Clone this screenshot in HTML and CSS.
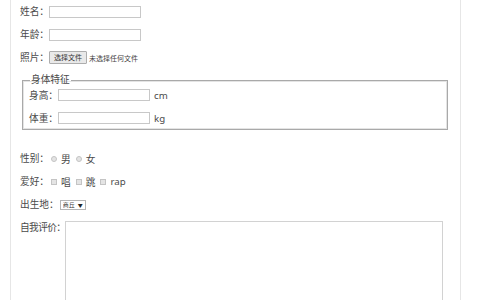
FILE: index.html
```html
<!DOCTYPE html>
<html lang="zh-CN">
<head>
<meta charset="UTF-8">
<meta name="viewport" content="width=device-width, initial-scale=1.0">
<title>个人信息</title>
<link rel="stylesheet" href="styles.css">
</head>
<body>
<div class="page">
  <form class="form">
    <div class="row">
      <label class="lbl">姓名：</label>
      <input type="text" class="text">
    </div>
    <div class="row">
      <label class="lbl">年龄：</label>
      <input type="text" class="text">
    </div>
    <div class="row">
      <label class="lbl">照片：</label>
      <button type="button" class="file-btn">选择文件</button>
      <span class="file-none">未选择任何文件</span>
    </div>

    <fieldset class="body-info">
      <legend>身体特征</legend>
      <div class="row small">
        <label class="lbl">身高：</label>
        <input type="text" class="text">
        <span class="unit">cm</span>
      </div>
      <div class="row small next">
        <label class="lbl">体重：</label>
        <input type="text" class="text">
        <span class="unit">kg</span>
      </div>
    </fieldset>

    <div class="row after-set">
      <label class="lbl">性别：</label>
      <input type="radio" name="sex" class="radio"><span class="opt">男</span>
      <input type="radio" name="sex" class="radio"><span class="opt">女</span>
    </div>
    <div class="row">
      <label class="lbl">爱好：</label>
      <input type="checkbox" class="check"><span class="opt">唱</span>
      <input type="checkbox" class="check"><span class="opt">跳</span>
      <input type="checkbox" class="check"><span class="opt">rap</span>
    </div>
    <div class="row">
      <label class="lbl">出生地：</label>
      <span class="city">
        <select class="city-select">
          <option>商丘</option>
          <option>郑州</option>
          <option>洛阳</option>
        </select>
        <span class="city-arrow">▼</span>
      </span>
    </div>
    <div class="row top">
      <label class="lbl tight">自我评价：</label>
      <textarea class="intro"></textarea>
    </div>
  </form>
</div>
</body>
</html>
```

FILE: styles.css
```css
body {
  margin: 0;
  background-color: #fff;
  font-family: "Noto Sans", "Noto Sans CJK SC", sans-serif;
  font-size: 9.7px;
  color: #4a4a4a;
}

.page {
  margin-left: 10px;
  width: 449px;
  border-left: 1px solid #e6e6e6;
  border-right: 1px solid #e6e6e6;
  height: 300px;
  overflow: hidden;
}

.form {
  padding: 0 12px 0 9px;
}

.row {
  display: flex;
  align-items: center;
  height: 23px;
}

.row.top {
  align-items: flex-start;
  height: auto;
}

.row.small {
  height: 16px;
}

.row.next {
  margin-top: 7px;
}

.lbl {
  line-height: 23px;
  white-space: nowrap;
}

.lbl.tight {
  letter-spacing: -0.6px;
}

.text {
  box-sizing: border-box;
  width: 92px;
  height: 12px;
  border: 1px solid #c8c8c8;
  padding: 0;
  margin: 0;
  background: #fff;
}

.file-btn {
  box-sizing: border-box;
  height: 13px;
  padding: 0 4px;
  margin: 0;
  font-family: inherit;
  font-size: 7px;
  color: #333;
  background-color: #e9e9e9;
  border: 1px solid #adadad;
  border-radius: 1px;
  line-height: 11px;
}

.file-none {
  font-size: 7px;
  color: #444;
  margin-left: 2px;
}

.body-info {
  margin: 4px 0 0 2px;
  padding: 0 6px 3px 6px;
  border: 1px solid #a9a9a9;
  box-shadow: inset 0 0 0 1px #e4e4e4;
}

.body-info legend {
  padding: 0 1px;
  margin-left: 1px;
  line-height: 14px;
}

.unit {
  margin-left: 4px;
}

.row.after-set {
  margin-top: 17px;
}

.radio,
.check {
  appearance: none;
  -webkit-appearance: none;
  box-sizing: border-box;
  width: 6px;
  height: 6px;
  margin: 0 4px 0 2px;
  border: 1px solid #c4c4c4;
  background-color: #e4e4e4;
}

.radio {
  border-radius: 50%;
}

.opt {
  margin-right: 3px;
}

.city {
  display: flex;
  align-items: center;
  box-sizing: border-box;
  height: 10px;
  margin-left: 1px;
  border: 1px solid #b5b5b5;
  background: #fff;
}

.city-select {
  appearance: none;
  -webkit-appearance: none;
  border: none;
  background: transparent;
  padding: 0 2px 0 2px;
  margin: 0;
  font-family: inherit;
  font-size: 6px;
  color: #333;
  height: 8px;
  line-height: 8px;
}

.city-arrow {
  font-size: 5px;
  color: #222;
  padding-right: 2px;
}

.intro {
  box-sizing: border-box;
  width: 378px;
  height: 120px;
  margin: 5px 0 0 0;
  padding: 0;
  border: 1px solid #d2d2d2;
  resize: none;
}
```
